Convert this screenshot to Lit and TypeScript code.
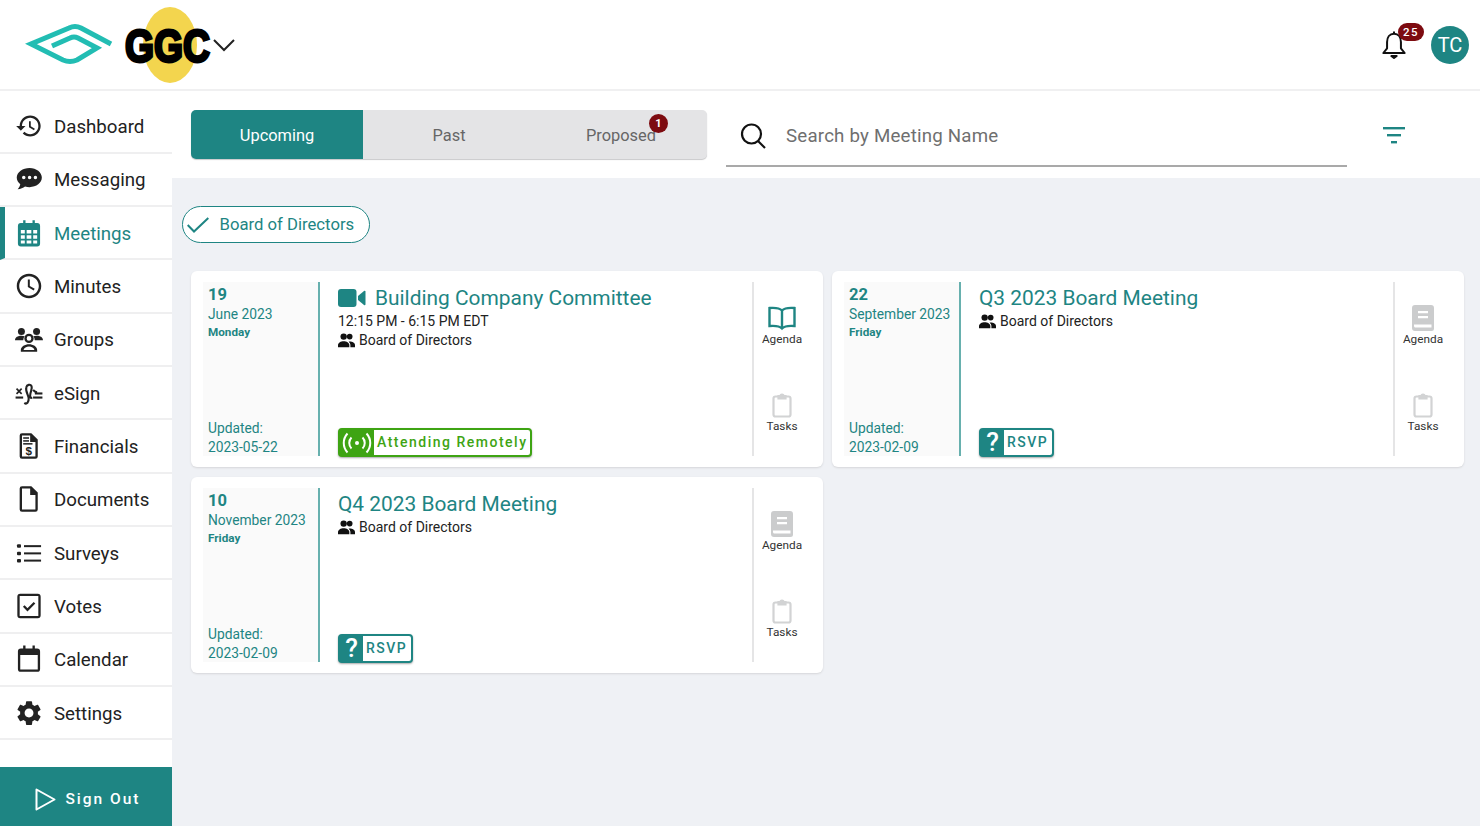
import { LitElement, html, css, svg } from "lit";
import { customElement } from "lit/decorators.js";

const ico = (p: unknown, size = 28, cls = "") => html`<svg class=${cls} width=${size} height=${size} viewBox="0 0 24 24" fill="currentColor">${p}</svg>`;

const PEOPLE = html`<svg width="17" height="15" viewBox="0 0 24 21" fill="#111"><circle cx="8" cy="5" r="4.500"/><circle cx="16.500" cy="5" r="4"/><path d="M0 20v-3c0-3.300 4-5.500 8-5.500s8 2.200 8 5.500v3z"/><path d="M17.500 20v-3c0-2-1-3.500-2.500-4.800.5-.1 1-.2 1.500-.2 4 0 7.500 2 7.500 5v3z"/></svg>`;

const FILE = "M6 1h8l5.500 5.500V21a2 2 0 0 1-2 2H6a2 2 0 0 1-2-2V3a2 2 0 0 1 2-2zm0 2v18h11.500V8.500H13V3H6z";

const NAV: { label: string; icon: unknown; active?: boolean }[] = [
  { label: "Dashboard", icon: svg`<path d="M13 3c-4.970 0-9 4.030-9 9H1l3.890 3.890.07.14L9 12H6c0-3.870 3.130-7 7-7s7 3.130 7 7-3.130 7-7 7c-1.930 0-3.680-.79-4.940-2.060l-1.420 1.420C8.270 19.990 10.510 21 13 21c4.970 0 9-4.030 9-9s-4.030-9-9-9zm-1 5v5l4.280 2.540.72-1.210-3.500-2.080V8H12z"/>` },
  { label: "Messaging", icon: svg`<path d="M12.500 2.500C6.700 2.500 1.500 6 1.500 10.800c0 2.300 1.200 4.200 3 5.700-.2 1.500-1 3-2.200 4.200 2.500 0 4.700-.9 6.300-2.200 1.200.3 2.600.5 3.900.5 5.800 0 10.500-3.700 10.500-8.200S18.300 2.500 12.500 2.500zM7.500 12.300a1.500 1.500 0 1 1 0-3 1.500 1.500 0 0 1 0 3zm5 0a1.500 1.500 0 1 1 0-3 1.500 1.500 0 0 1 0 3zm5 0a1.500 1.500 0 1 1 0-3 1.500 1.500 0 0 1 0 3z"/>` },
  { label: "Meetings", active: true, icon: svg`<path fill-rule="evenodd" d="M7 1h2v2.500h6V1h2v2.500h2A2.500 2.500 0 0 1 21.500 6v15a2.500 2.500 0 0 1-2.500 2.500H5A2.500 2.500 0 0 1 2.500 21V6A2.500 2.500 0 0 1 5 3.500h2V1zM5 9.500v3h3.400v-3H5zm5 0v3h4v-3h-4zm5.600 0v3H19v-3h-3.400zM5 14v3h3.400v-3H5zm5 0v3h4v-3h-4zm5.600 0v3H19v-3h-3.400zM5 18.500V21h3.400v-2.500H5zm5 0V21h4v-2.500h-4zm5.600 0V21H19v-2.500h-3.400z"/>` },
  { label: "Minutes", icon: svg`<path d="M12 1.500C6.200 1.500 1.500 6.200 1.500 12S6.200 22.500 12 22.500 22.500 17.800 22.500 12 17.800 1.500 12 1.500zm0 18.900c-4.640 0-8.400-3.760-8.400-8.400S7.360 3.600 12 3.600s8.400 3.760 8.400 8.400-3.760 8.400-8.400 8.400z"/><path d="M12.700 6.500h-1.700v6.300l5 3 .9-1.400-4.200-2.500z"/>` },
  { label: "Groups", icon: svg`<circle cx="5.500" cy="5.500" r="3"/><circle cx="18.500" cy="5.500" r="3"/><path d="M0 13c0-2.500 2.500-3.800 5.500-3.800 1 0 2 .2 2.800.5-.8 1-1.200 2.100-1.200 3.300H0zM24 13c0-2.500-2.500-3.800-5.500-3.800-1 0-2 .2-2.800.5.8 1 1.200 2.100 1.200 3.300H24z"/><path fill-rule="evenodd" d="M12 7.500a4 4 0 1 1 0 8 4 4 0 0 1 0-8zm0 2a2 2 0 1 0 0 4 2 2 0 0 0 0-4zM5 21.500c0-3 3.500-5 7-5s7 2 7 5v1.500H5v-1.500zm2.300 0h9.400c-.4-1.800-2.600-3-4.700-3s-4.300 1.200-4.700 3z"/>` },
  { label: "eSign", icon: svg`<path d="M.8 8.800l1-1 1.700 1.700 1.700-1.700 1 1-1.700 1.700 1.700 1.700-1 1-1.700-1.700-1.700 1.700-1-1 1.700-1.700z"/><rect x=".5" y="15" width="6.500" height="1.800"/><rect x="15.500" y="15" width="8" height="1.800"/><rect x="17" y="11.500" width="6.500" height="1.800"/><path fill="none" stroke="currentColor" stroke-width="1.800" d="M8 20.500c2 1.500 4-.5 3.700-4-.3-3-3-6-2-9.500.5-2 3.500-3 4.500-.8.700 1.800-.5 3.800-1 6.300-.6 3 0 4.500 1.500 3.300M15.500 9.500c1 1 2 2 3.500 2"/>` },
  { label: "Financials", icon: svg`<path fill-rule="evenodd" d=${FILE}/><rect x="7" y="4.500" width="5" height="1.300"/><rect x="7" y="7" width="5" height="1.300"/><rect x="7" y="9.500" width="8" height="1.300"/><text x="11.800" y="20" font-size="10" font-weight="700" text-anchor="middle" font-family="Liberation Sans, sans-serif">$</text>` },
  { label: "Documents", icon: svg`<path fill-rule="evenodd" d=${FILE}/>` },
  { label: "Surveys", icon: svg`<g transform="translate(1.700 2) scale(.86)"><rect x="0" y="3" width="4" height="3.500" rx="1"/><rect x="0" y="10.300" width="4" height="3.500" rx="1"/><rect x="0" y="17.500" width="4" height="3.500" rx="1"/><rect x="7" y="3.800" width="17" height="2"/><rect x="7" y="11" width="17" height="2"/><rect x="7" y="18.200" width="17" height="2"/></g>` },
  { label: "Votes", icon: svg`<path fill-rule="evenodd" d="M4.500 1.500h15A2.500 2.500 0 0 1 22 4v16a2.500 2.500 0 0 1-2.500 2.500h-15A2.500 2.500 0 0 1 2 20V4a2.500 2.500 0 0 1 2.500-2.500zM4 3.500V20.500h16V3.500H4z"/><path fill="none" stroke="currentColor" stroke-width="2" d="M7.500 12l3.200 3.200 6-6"/>` },
  { label: "Calendar", icon: svg`<path fill-rule="evenodd" d="M7 .5h2V3h6V.5h2V3h2a2.500 2.500 0 0 1 2.500 2.500v15A2.500 2.500 0 0 1 19 23H5a2.500 2.500 0 0 1-2.500-2.500v-15A2.500 2.500 0 0 1 5 3h2V.5zM4.500 8.500v12.500h15V8.500h-15z"/>` },
  { label: "Settings", icon: svg`<path transform="translate(-.7 -.7) scale(1.060)" d="M19.140 12.940c.04-.3.06-.61.06-.94 0-.32-.02-.64-.07-.94l2.030-1.580c.18-.14.23-.41.12-.61l-1.920-3.320c-.12-.22-.37-.29-.59-.22l-2.390.96c-.5-.38-1.030-.7-1.620-.94l-.36-2.540c-.04-.24-.24-.41-.48-.41h-3.840c-.24 0-.43.17-.47.41l-.36 2.540c-.59.24-1.130.57-1.620.94l-2.390-.96c-.22-.08-.47 0-.59.22L2.740 8.870c-.12.21-.08.47.12.61l2.030 1.580c-.05.3-.09.63-.09.94s.02.64.07.94l-2.030 1.580c-.18.14-.23.41-.12.61l1.920 3.320c.12.22.37.29.59.22l2.390-.96c.5.38 1.030.7 1.620.94l.36 2.540c.05.24.24.41.48.41h3.840c.24 0 .44-.17.47-.41l.36-2.540c.59-.24 1.130-.56 1.620-.94l2.390.96c.22.08.47 0 .59-.22l1.920-3.320c.12-.22.07-.47-.12-.61l-2.010-1.580zM12 15.600c-1.980 0-3.600-1.620-3.600-3.600s1.620-3.600 3.600-3.600 3.600 1.620 3.600 3.600-1.620 3.600-3.600 3.600z"/>` },
];

type Meeting = {
  day: string; month: string; weekday: string; updated: string; title: string;
  time?: string; video?: boolean; remote?: boolean; open?: boolean;
};
const MEETINGS: Meeting[] = [
  { day: "19", month: "June 2023", weekday: "Monday", updated: "2023-05-22", title: "Building Company Committee", time: "12:15 PM - 6:15 PM EDT", video: true, remote: true, open: true },
  { day: "22", month: "September 2023", weekday: "Friday", updated: "2023-02-09", title: "Q3 2023 Board Meeting" },
  { day: "10", month: "November 2023", weekday: "Friday", updated: "2023-02-09", title: "Q4 2023 Board Meeting" },
];

const BOOK_OPEN = html`<svg width="30" height="26" viewBox="0 0 30 26" fill="none" stroke="currentColor" stroke-width="2.400"><path d="M15 5.500C12.500 3 8 2.500 2.500 3v18c5.500-.5 10 0 12.500 2.500 2.500-2.500 7-3 12.500-2.500V3C22 2.500 17.500 3 15 5.500zM15 5.500v18"/></svg>`;
const BOOK_CLOSED = html`<svg width="24" height="28" viewBox="0 0 24 28" fill="#cbcccd"><path fill-rule="evenodd" d="M4 1h16a3 3 0 0 1 3 3v20.500a2.500 2.500 0 0 1-2.500 2.500H4a3 3 0 0 1-3-3V4a3 3 0 0 1 3-3zm3 6v2.200h10V7H7zm0 5v2.200h10V12H7zM3 20.500v1.500c0 .8.500 1.500 1.500 1.500h16V20.500H3z"/></svg>`;
const CLIP = html`<svg width="20" height="26" viewBox="0 0 20 26" fill="none" stroke="#d2d3d4" stroke-width="2.200"><rect x="1.500" y="4.500" width="17" height="20" rx="2"/><path d="M6.500 6.500V4h2a1.500 1.500 0 0 1 3 0h2v2.500z" fill="#d2d3d4"/></svg>`;

@customElement("app-root")
export class AppRoot extends LitElement {
  static styles = css`
    :host { display: block; width: 100%; height: 100vh; min-height: 826px; font-family: Roboto, "Noto Sans", sans-serif; color: #222; background: #fff; overflow: hidden; }
    * { box-sizing: border-box; }
    .header { height: 91px; display: flex; align-items: center; justify-content: space-between; border-bottom: 2px solid #f0f0f1; padding: 0 11px 0 25px; }
    .logo { display: block; }
    .hright { display: flex; align-items: center; gap: 21px; }
    .bell { position: relative; display: flex; width: 32px; height: 32px; }
    .bell-badge { position: absolute; left: 20px; top: -6px; width: 26px; height: 18px; border-radius: 9px; background: #7d0b10; color: #fff; font-size: 11.500px; letter-spacing: 1.500px; display: flex; align-items: center; justify-content: center; font-weight: 500; }
    .avatar { width: 38px; height: 38px; border-radius: 50%; background: #1e8583; color: #fff; font-size: 20px; display: flex; align-items: center; justify-content: center; }
    .body { display: flex; height: calc(100% - 91px); }
    .side { width: 172px; flex: none; display: flex; flex-direction: column; padding-top: 9.500px; background: #fff; }
    .nav { height: 53.330px; flex: none; display: flex; align-items: center; border-bottom: 2px solid #efeff0; padding-left: 15px; gap: 11px; font-size: 18.700px; color: #222; }
    .nav span { padding-top: 2px; }
    .nav.active { color: #1e8583; border-left: 5px solid #1e8583; padding-left: 10px; }
    .nav svg { flex: none; }
    .signout { margin-top: auto; height: 59px; background: #1e8583; color: #fff; display: flex; align-items: center; justify-content: center; gap: 9px; font-size: 15.500px; font-weight: 500; letter-spacing: 2px; padding: 5px 0 0 4px; }
    .main { flex: 1; display: flex; flex-direction: column; background: #eff1f5; min-width: 0; }
    .top { height: 87px; background: #fff; display: flex; align-items: flex-start; padding: 19px 0 0 19px; }
    .tabs { width: 516px; height: 49px; display: flex; background: #e4e4e6; border-radius: 5px; box-shadow: 0 1px 1px #c9c9cb; flex: none; }
    .tab { flex: 1; display: flex; align-items: center; justify-content: center; font-size: 16.400px; color: #666; position: relative; padding-top: 2px; }
    .tab.on { background: #1e8583; color: #fff; border-radius: 5px 0 0 5px; }
    .tab-badge { position: absolute; left: 114px; top: 4px; width: 19px; height: 19px; border-radius: 50%; background: #7d0b10; color: #fff; font-size: 11px; font-weight: 700; display: flex; align-items: center; justify-content: center; }
    .search { width: 621px; height: 57px; margin-left: 19px; border-bottom: 2px solid #a9a9a9; display: flex; align-items: center; padding: 0 0 4px 13px; gap: 19px; font-size: 18.700px; color: #6f6f6f; flex: none; letter-spacing: .2px; }
    .search svg { color: #111; flex: none; }
    .filter { margin-left: 36px; margin-top: 17px; color: #1e8583; }
    .content { padding: 28px 16px 0 10px; }
    .chip { display: inline-flex; align-items: center; height: 37px; width: 188px; border: 1.500px solid #1e8583; border-radius: 19px; background: #fff; color: #1e8583; font-size: 16.700px; padding-left: 3.500px; gap: 11px; }
    .grid { display: grid; grid-template-columns: 632px 632px; column-gap: 9px; row-gap: 10px; margin: 28px 0 0 9px; }
    .card { height: 196px; background: #fff; border-radius: 6px; box-shadow: 0 1px 2px #d5d6d9; padding: 11px 0 11px 12px; display: flex; }
    .date { width: 117px; flex: none; background: #fafafa; border-right: 2px solid #67b0ae; padding: 3px 0 0 5px; color: #1e8583; display: flex; flex-direction: column; font-size: 13.800px; line-height: 19px; }
    .d-day { font-size: 16.500px; font-weight: 700; line-height: 20px; }
    .d-week { font-size: 11.700px; font-weight: 700; line-height: 17px; }
    .d-up { margin-top: auto; margin-bottom: -1px; }
    .d-up div { white-space: nowrap; }
    .mid { flex: 1; padding: 2px 0 0 18px; display: flex; flex-direction: column; font-size: 14px; line-height: 19px; color: #222; min-width: 0; }
    .title { display: flex; align-items: center; gap: 9px; color: #1e8583; font-size: 20.900px; line-height: 28px; white-space: nowrap; }
    .line { display: flex; align-items: center; gap: 4px; white-space: nowrap; }
    .badge { margin-top: auto; margin-bottom: -1px; align-self: flex-start; height: 29px; display: flex; border: 2px solid; border-radius: 4px; box-shadow: 0 1px 2px #aaa; background: #fff; font-size: 14px; font-weight: 500; letter-spacing: 1.500px; white-space: nowrap; }
    .badge .bi { display: flex; flex: none; align-items: center; justify-content: center; color: #fff; }
    .badge .bt { display: flex; align-items: center; padding: 0 0 0 3px; }
    .badge.g { border-color: #3ea413; color: #3ea413; width: 194px; }
    .badge.g .bi { background: #3ea413; width: 34px; }
    .badge.t { border-color: #1e8583; color: #1e8583; width: 75px; }
    .badge.t .bi { background: #1e8583; width: 23px; font-size: 26px; line-height: 25px; font-weight: 500; letter-spacing: 0; }
    .acts { width: 61px; margin-right: 10px; padding-right: 3px; flex: none; border-left: 2px solid #e5e5e6; display: flex; flex-direction: column; align-items: center; font-size: 11.800px; color: #333; }
    .act { display: flex; flex-direction: column; align-items: center; height: 87px; padding-top: 22px; line-height: 14px; }
    .act .ai { height: 28px; display: flex; align-items: center; justify-content: center; color: #1e8583; }
  `;

  renderCard(m: Meeting) {
    return html`<div class="card">
      <div class="date">
        <div class="d-day">${m.day}</div>
        <div>${m.month}</div>
        <div class="d-week">${m.weekday}</div>
        <div class="d-up"><div>Updated:</div><div>${m.updated}</div></div>
      </div>
      <div class="mid">
        <div class="title">
          ${m.video ? html`<svg width="28" height="18" viewBox="0 0 28 18" fill="#1e8583"><rect x="0" y="0" width="18.500" height="18" rx="3"/><path d="M20 7l6-5c.5-.4 1.500-.1 1.500.5v13c0 .6-1 .9-1.500.5l-6-5z"/></svg>` : ""}
          <span>${m.title}</span>
        </div>
        ${m.time ? html`<div class="line">${m.time}</div>` : ""}
        <div class="line">${PEOPLE}<span>Board of Directors</span></div>
        ${m.remote
          ? html`<div class="badge g"><div class="bi"><svg width="30" height="22" viewBox="0 0 30 22" fill="none" stroke="#fff" stroke-width="2"><circle cx="15" cy="11" r="2" fill="#fff" stroke="none"/><path d="M9.500 5.500c-3 3-3 8 0 11M20.500 5.500c3 3 3 8 0 11M5.500 1.500c-5 5.500-5 13.500 0 19M24.500 1.500c5 5.500 5 13.500 0 19"/></svg></div><div class="bt">Attending Remotely</div></div>`
          : html`<div class="badge t"><div class="bi">?</div><div class="bt">RSVP</div></div>`}
      </div>
      <div class="acts">
        <div class="act"><div class="ai">${m.open ? BOOK_OPEN : BOOK_CLOSED}</div>Agenda</div>
        <div class="act"><div class="ai">${CLIP}</div>Tasks</div>
      </div>
    </div>`;
  }

  render() {
    return html`
      <div class="header">
        <svg class="logo" width="212" height="80" viewBox="25 5 212 80">
          <ellipse cx="170" cy="45" rx="27" ry="38" fill="#f3d54e"/>
          <path d="M111 44 L81 28 Q75 25 69 28 L31 44 L63 60 Q70 63 77 60 L97 48 L78 38 Q74 36 70 38 L52 46" fill="none" stroke="#22bdb3" stroke-width="5"/>
          <text x="125" y="62" font-family="Liberation Sans, sans-serif" font-weight="700" font-size="46" textLength="85" lengthAdjust="spacingAndGlyphs" stroke="#000" stroke-width="3">GGC</text>
          <path d="M214 40 L224 50 L234 40" fill="none" stroke="#222" stroke-width="2"/>
        </svg>
        <div class="hright">
          <div class="bell">
            <svg width="32" height="32" viewBox="0 0 24 24" fill="none" stroke="#111" stroke-width="1.500" stroke-linejoin="round"><path d="M12 3.500c-3.300 0-5.200 2.700-5.200 6.300v4.700L4 18h16l-2.800-3.500V9.800c0-3.600-1.900-6.300-5.200-6.300z"/><path d="M12 1.800v1.700" /><path d="M10 20.300h4l-2 1.500z" fill="#111"/></svg>
            <div class="bell-badge">25</div>
          </div>
          <div class="avatar">TC</div>
        </div>
      </div>
      <div class="body">
        <div class="side">
          ${NAV.map((n) => html`<div class="nav ${n.active ? "active" : ""}">${ico(n.icon, 28)}<span>${n.label}</span></div>`)}
          <div class="signout">
            <svg width="21" height="23" viewBox="0 0 21 23" fill="none" stroke="#fff" stroke-width="2" stroke-linejoin="round"><path d="M1.500 1.500L19.500 11.500 1.500 21.500z"/></svg>
            <span>Sign Out</span>
          </div>
        </div>
        <div class="main">
          <div class="top">
            <div class="tabs">
              <div class="tab on">Upcoming</div>
              <div class="tab">Past</div>
              <div class="tab">Proposed<div class="tab-badge">1</div></div>
            </div>
            <div class="search">
              <svg width="28" height="28" viewBox="0 0 28 28" fill="none" stroke="currentColor" stroke-width="2.200"><circle cx="12.500" cy="12" r="9.500"/><path d="M19 19l7 7"/></svg>
              <span>Search by Meeting Name</span>
            </div>
            <svg class="filter" width="22" height="18" viewBox="0 0 22 18" fill="currentColor"><rect x="0" y="0" width="22" height="2.400"/><rect x="4" y="7" width="14" height="2.400"/><rect x="8" y="14" width="6" height="2.400"/></svg>
          </div>
          <div class="content">
            <div class="chip">
              <svg width="22" height="16" viewBox="0 0 22 16" fill="none" stroke="#1e8583" stroke-width="2"><path d="M.7 8l6.300 6.500L21.300 1"/></svg>
              <span>Board of Directors</span>
            </div>
            <div class="grid">${MEETINGS.map((m) => this.renderCard(m))}</div>
          </div>
        </div>
      </div>
    `;
  }
}
